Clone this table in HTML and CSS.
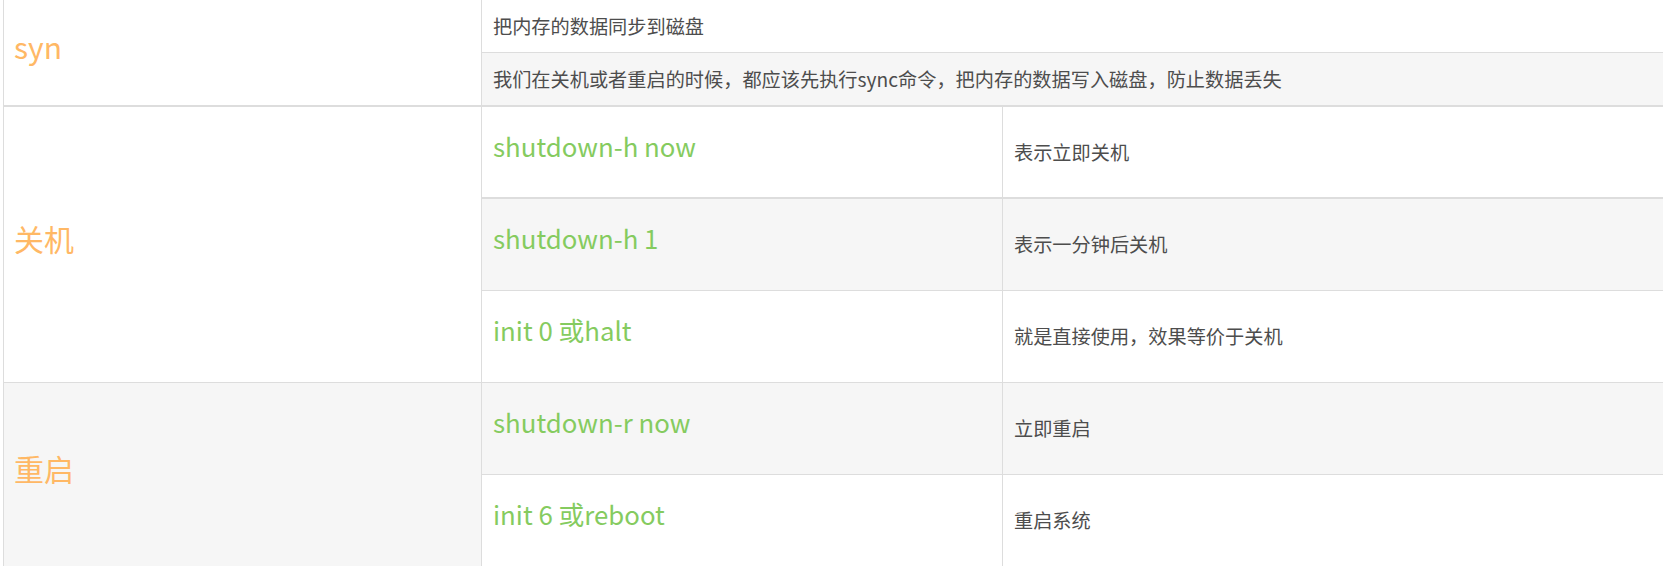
FILE: index.html
```html
<!DOCTYPE html>
<html lang="zh-CN">
<head>
<meta charset="utf-8">
<title>Linux 关机重启命令</title>
<link rel="stylesheet" href="styles.css">
</head>
<body>
<div class="page">
  <table class="cmd-table">
    <colgroup>
      <col class="c1">
      <col class="c2">
      <col class="c3">
    </colgroup>
    <tbody>
      <tr>
        <td class="cat bb2" rowspan="2"><span class="big orange">syn</span></td>
        <td class="desc h53" colspan="2">把内存的数据同步到磁盘</td>
      </tr>
      <tr>
        <td class="desc h54 bb2 gray" colspan="2">我们在关机或者重启的时候，都应该先执行sync命令，把内存的数据写入磁盘，防止数据丢失</td>
      </tr>
      <tr>
        <td class="cat" rowspan="3"><span class="big orange">关机</span></td>
        <td class="cmd bb2 h92"><span class="big green">shutdown-h now</span></td>
        <td class="desc bb2 h92">表示立即关机</td>
      </tr>
      <tr class="gray">
        <td class="cmd h92"><span class="big green">shutdown-h 1</span></td>
        <td class="desc h92">表示一分钟后关机</td>
      </tr>
      <tr>
        <td class="cmd h92"><span class="big green">init 0 或halt</span></td>
        <td class="desc h92">就是直接使用，效果等价于关机</td>
      </tr>
      <tr>
        <td class="cat gray" rowspan="2"><span class="big orange">重启</span></td>
        <td class="cmd h92 gray"><span class="big green">shutdown-r now</span></td>
        <td class="desc h92 gray">立即重启</td>
      </tr>
      <tr>
        <td class="cmd h92"><span class="big green">init 6 或reboot</span></td>
        <td class="desc h92">重启系统</td>
      </tr>
    </tbody>
  </table>
</div>
</body>
</html>
```

FILE: styles.css
```css
html {
  overflow: hidden;
  background: #fff;
}

body {
  margin: 0;
  font-family: "Noto Sans CJK SC", "Noto Sans", sans-serif;
  color: #4d4d4d;
}

.page {
  padding-left: 3px;
}

.cmd-table {
  table-layout: fixed;
  width: 1720px;
  border-collapse: separate;
  border-spacing: 0;
}

.c1 { width: 478px; }
.c2 { width: 521px; }

.cmd-table td {
  box-sizing: border-box;
  border-left: 1px solid #dddddd;
  border-bottom: 1px solid #dddddd;
  padding: 0 11px;
  vertical-align: middle;
  background: #fff;
}

.cmd-table td.cat {
  padding: 0 10px;
}

.cmd-table .gray td,
.cmd-table td.gray {
  background: #f6f6f6;
}

.cmd-table td.bb2 {
  border-bottom-width: 2px;
}

.h53 { height: 53px; }
.h54 { height: 54px; }
.h92 { height: 92px; }

.desc {
  font-size: 19.2px;
  line-height: 1.4;
  white-space: nowrap;
}

.big {
  display: block;
  line-height: 1.3;
  white-space: nowrap;
}

.orange {
  color: #ffb865;
  font-size: 30px;
  margin-bottom: 12px;
}

.green {
  color: #85cb5f;
  font-size: 25.8px;
  margin-bottom: 13px;
}
```
